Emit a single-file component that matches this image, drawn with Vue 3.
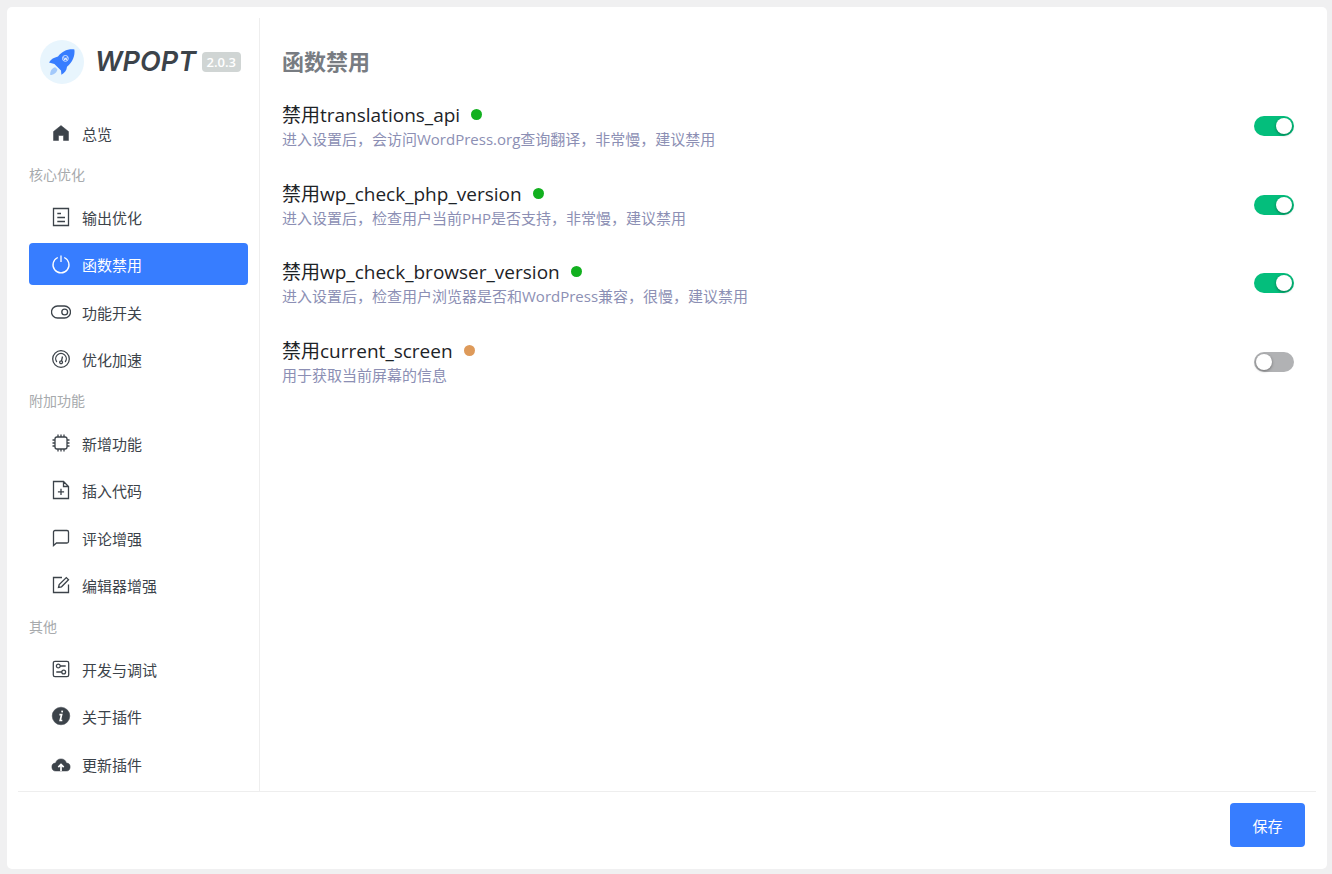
<template>
  <div class="page">
    <div class="card">
      <div class="body">
        <aside class="sidebar">
          <div class="brand">
            <svg class="brand-logo" viewBox="0 0 44 44" aria-hidden="true">
              <circle cx="22" cy="22" r="22" fill="#e8f5fd" />
              <path d="M9 22.6C11 19 14 17.8 18 16.6C22 11.4 27 8.8 34.4 9.4C35.2 15.600 32.600 22 27 26.800C26.600 30.600 24.600 33.200 21.400 34.800L21 30.600L14.400 24L9 22.600Z" fill="#377dff" />
              <circle cx="25.400" cy="18.400" r="2.900" fill="#377dff" stroke="#d5e6ff" stroke-width="1" />
              <path d="M23.700 17.300L24.600 20L25.400 17.800L26.200 20L27.100 17.300" fill="none" stroke="#fff" stroke-width="0.800" />
              <path d="M15.200 27.200C12 27.800 10 31 10.200 35C14 34.800 17 32.600 17.400 29.200Z" fill="#a3c9fb" />
            </svg>
            <span class="brand-name">WPOPT</span>
            <span class="version">2.0.3</span>
          </div>

          <nav class="menu">
            <section v-for="group in groups" :key="group.title" class="group">
              <h2 v-if="group.title" class="group-title">{{ group.title }}</h2>
              <a
                v-for="item in group.items"
                :key="item.name"
                href="#"
                class="menu-item"
                :class="{ active: item.name === current }"
                @click.prevent="current = item.name"
              >
                <svg class="icon" viewBox="0 0 20 20" aria-hidden="true">
                  <path v-if="item.fill" :d="item.fill" class="solid" />
                  <path v-if="item.line" :d="item.line" class="line" />
                  <path v-if="item.cut" :d="item.cut" class="cut" />
                </svg>
                <span>{{ item.name }}</span>
              </a>
            </section>
          </nav>
        </aside>

        <main class="content">
          <h1>函数禁用</h1>
          <div v-for="opt in options" :key="opt.id" class="option">
            <label class="option-text" :for="opt.id">
              <span class="option-title">
                禁用{{ opt.id }}
                <i class="dot" :class="opt.level"></i>
              </span>
              <span class="option-desc">{{ opt.desc }}</span>
            </label>
            <input :id="opt.id" v-model="opt.on" type="checkbox" class="switch" />
          </div>
        </main>
      </div>

      <footer class="footer">
        <button type="button" class="save">保存</button>
      </footer>
    </div>
  </div>
</template>

<script setup>
import { ref } from 'vue'

const current = ref('函数禁用')

const groups = [
  {
    title: '',
    items: [
      { name: '总览', fill: 'M10 2.5L17.500 8.500V17.500H12.500V12.500H7.500V17.500H2.500V8.500Z' }
    ]
  },
  {
    title: '核心优化',
    items: [
      { name: '输出优化', line: 'M2.500 1.500H17.500V18.500H2.500ZM6.300 6.500H10M6.300 10.500H14M6.300 14.500H14' },
      { name: '函数禁用', line: 'M6.800 3.500A8 8 0 1 0 13.200 3.500M10 1.500V8' },
      {
        name: '功能开关',
        line: 'M6.500 4H13.500A6 6 0 0 1 13.500 16H6.500A6 6 0 0 1 6.500 4ZM10.800 10A2.900 2.900 0 1 0 16.600 10A2.900 2.900 0 1 0 10.800 10'
      },
      {
        name: '优化加速',
        line: 'M1.700 10A8.300 8.300 0 1 0 18.300 10A8.300 8.300 0 1 0 1.700 10M5.800 13A5.300 5.300 0 1 1 14.200 13M11.500 7.500L10.500 12M8.700 13.300A1.400 1.400 0 1 0 11.500 13.300A1.400 1.400 0 1 0 8.700 13.300'
      }
    ]
  },
  {
    title: '附加功能',
    items: [
      {
        name: '新增功能',
        line: 'M6 4H14A2 2 0 0 1 16 6V14A2 2 0 0 1 14 16H6A2 2 0 0 1 4 14V6A2 2 0 0 1 6 4ZM7 1.500V4M10 1.500V4M13 1.500V4M7 16V18.500M10 16V18.500M13 16V18.500M1.500 7H4M1.500 10H4M1.500 13H4M16 7H18.500M16 10H18.500M16 13H18.500'
      },
      { name: '插入代码', line: 'M2.500 1.500H12.500L17.500 6.500V18.500H2.500ZM12.500 1.500V6.500H17.500M10 8.800V15M6.900 11.900H13.100' },
      { name: '评论增强', line: 'M2.500 17.500V4A1.500 1.500 0 0 1 4 2.500H16A1.500 1.500 0 0 1 17.500 4V13.500A1.500 1.500 0 0 1 16 15H5.500Z' },
      { name: '编辑器增强', line: 'M11 2.500H2.500V17.500H17.500V9.500M7.500 12.500L8.200 9.500L15.300 2.600L17.500 4.700L10.500 11.800Z' }
    ]
  },
  {
    title: '其他',
    items: [
      {
        name: '开发与调试',
        line: 'M4 2.300H16A1.700 1.700 0 0 1 17.700 4V16A1.700 1.700 0 0 1 16 17.700H4A1.700 1.700 0 0 1 2.300 16V4A1.700 1.700 0 0 1 4 2.300ZM5.400 7A1.900 1.900 0 1 0 9.200 7A1.900 1.900 0 1 0 5.400 7M9.200 7H14.700M10.800 13A1.900 1.900 0 1 0 14.600 13A1.900 1.900 0 1 0 10.800 13M5.300 13H10.800'
      },
      {
        name: '关于插件',
        fill: 'M1.200 10A8.800 8.800 0 1 0 18.800 10A8.800 8.800 0 1 0 1.200 10',
        cut: 'M11.300 4.600L11 6.400M8.400 8.700H10.600L9.200 14.500H11.300'
      },
      {
        name: '更新插件',
        fill: 'M5.200 17A4 4 0 0 1 4.600 9A5.600 5.600 0 0 1 15.400 9A4 4 0 0 1 14.800 17Z',
        cut: 'M10 17V10.800M7.300 13.200L10 10.500L12.700 13.200'
      }
    ]
  }
]

const options = ref([
  { id: 'translations_api', level: 'safe', on: true, desc: '进入设置后，会访问WordPress.org查询翻译，非常慢，建议禁用' },
  { id: 'wp_check_php_version', level: 'safe', on: true, desc: '进入设置后，检查用户当前PHP是否支持，非常慢，建议禁用' },
  { id: 'wp_check_browser_version', level: 'safe', on: true, desc: '进入设置后，检查用户浏览器是否和WordPress兼容，很慢，建议禁用' },
  { id: 'current_screen', level: 'warn', on: false, desc: '用于获取当前屏幕的信息' }
])
</script>

<style>
body {
  background: #f0f0f1;
}
</style>

<style scoped>
.page {
  box-sizing: border-box;
  min-height: 100vh;
  padding: 7px 5px 5px 7px;
  display: flex;
  font-family: "Open Sans", "Noto Sans CJK SC", sans-serif;
  font-size: 15px;
  color: #3c434a;
}

.card {
  flex: 1;
  display: flex;
  flex-direction: column;
  padding: 11px;
  background: #fff;
  border-radius: 5px;
}

.body {
  flex: 1;
  display: flex;
  border-bottom: 1px solid #eee;
}

.sidebar {
  box-sizing: border-box;
  width: 242px;
  flex: none;
  padding: 22px 11px 5px;
  border-right: 1px solid #eee;
}

.brand {
  display: flex;
  align-items: center;
  padding-left: 11px;
  margin-bottom: 28px;
}

.brand-logo {
  width: 44px;
  height: 44px;
  margin-right: 11px;
}

.brand-name {
  font-family: Inter, sans-serif;
  font-size: 27px;
  line-height: 44px;
  font-weight: 600;
  font-style: italic;
}

.version {
  margin-left: auto;
  margin-right: 7px;
  padding: 0 5px;
  font-size: 13px;
  line-height: 20px;
  font-weight: 600;
  color: #fff;
  background: #d0d5d4;
  border-radius: 4px;
}

.group {
  display: flex;
  flex-direction: column;
}

.group-title {
  margin: 0;
  font-size: 14px;
  line-height: 42px;
  font-weight: 400;
  color: #a7aaad;
}

.menu-item {
  display: flex;
  align-items: center;
  gap: 11px;
  height: 42px;
  padding-left: 22px;
  border-radius: 4px;
  color: inherit;
  text-decoration: none;
}

.menu-item + .menu-item {
  margin-top: 5px;
}

.menu-item + .menu-item:nth-child(even) {
  margin-top: 6px;
}

.menu-item.active {
  background: #377dff;
  color: #fff;
}

.icon {
  width: 20px;
  height: 20px;
}

.solid {
  fill: currentColor;
  stroke: currentColor;
  stroke-width: 0.5;
  stroke-linejoin: round;
}

.line {
  fill: none;
  stroke: currentColor;
  stroke-width: 1.3;
}

.cut {
  fill: none;
  stroke: #fff;
  stroke-width: 1.7;
}

.content {
  flex: 1;
  padding: 22px;
}

h1 {
  margin: 0 0 20px;
  font-size: 22px;
  line-height: 42px;
  font-weight: 700;
  color: #787c82;
}

.option {
  display: flex;
  align-items: center;
  justify-content: space-between;
  margin-bottom: 31px;
}

.option:nth-child(odd) {
  margin-bottom: 30px;
}

.option-text {
  display: flex;
  flex-direction: column;
}

.option-title {
  display: flex;
  align-items: center;
  gap: 11px;
  font-size: 19px;
  line-height: 26px;
  color: #1d2327;
}

.option-desc {
  line-height: 22px;
  color: #8c8fb4;
}

.dot {
  width: 11px;
  height: 11px;
  margin-bottom: 2px;
  border-radius: 50%;
}

.dot.safe {
  background: #12b01f;
}

.dot.warn {
  background: #de9a5a;
}

.switch {
  appearance: none;
  box-sizing: border-box;
  flex: none;
  width: 40px;
  height: 20px;
  margin: 0;
  padding: 2px;
  display: flex;
  border-radius: 10px;
  background: #b1b2b4;
  cursor: pointer;
}

.switch::before {
  content: "";
  width: 16px;
  height: 16px;
  border-radius: 50%;
  background: #fff;
  box-shadow: 0 1px 3px rgba(0, 0, 0, 0.4);
}

.switch:checked {
  justify-content: flex-end;
  background: #04be7c;
}

.footer {
  display: flex;
  justify-content: flex-end;
  padding: 11px;
}

.save {
  width: 75px;
  height: 44px;
  border: none;
  border-radius: 4px;
  background: #377dff;
  color: #fff;
  font: inherit;
  cursor: pointer;
}
</style>
